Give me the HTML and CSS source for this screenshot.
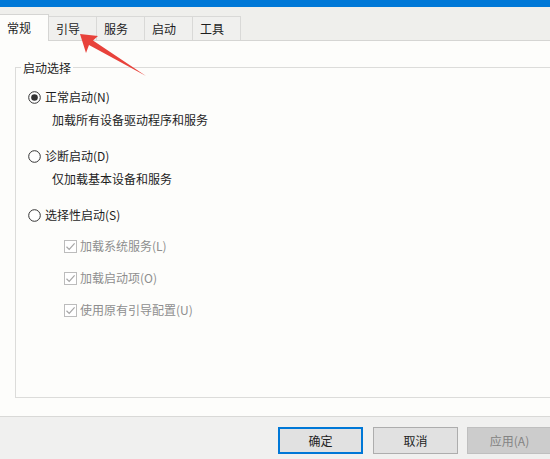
FILE: index.html
```html
<!DOCTYPE html>
<html lang="zh-CN">
<head>
<meta charset="utf-8">
<title>系统配置</title>
<link rel="stylesheet" href="styles.css">
</head>
<body>
<div class="window">
  <div class="titlebar"></div>
  <div class="tabs">
    <div class="tab active">常规</div>
    <div class="tab">引导</div>
    <div class="tab">服务</div>
    <div class="tab">启动</div>
    <div class="tab">工具</div>
  </div>
  <div class="panel">
    <div class="group">
      <div class="legend">启动选择</div>
      <div class="opt first">
        <svg class="radio" width="13" height="13" viewBox="0 0 13 13"><circle cx="6.5" cy="6.5" r="5.8" fill="#fff" stroke="#333" stroke-width="1"/><circle cx="6.5" cy="6.5" r="3.3" fill="#333"/></svg>
        <span>正常启动(N)</span>
      </div>
      <div class="desc">加载所有设备驱动程序和服务</div>
      <div class="opt">
        <svg class="radio" width="13" height="13" viewBox="0 0 13 13"><circle cx="6.5" cy="6.5" r="5.8" fill="#fff" stroke="#333" stroke-width="1"/></svg>
        <span>诊断启动(D)</span>
      </div>
      <div class="desc">仅加载基本设备和服务</div>
      <div class="opt">
        <svg class="radio" width="13" height="13" viewBox="0 0 13 13"><circle cx="6.5" cy="6.5" r="5.8" fill="#fff" stroke="#333" stroke-width="1"/></svg>
        <span>选择性启动(S)</span>
      </div>
      <div class="check">
        <svg class="box" width="13" height="13" viewBox="0 0 13 13"><rect x="0.5" y="0.5" width="12" height="12" fill="#fff" stroke="#bcbcbc"/><path d="M2.5 6.8 L5.2 9.4 L10.6 3.4" fill="none" stroke="#a6a6a6" stroke-width="1.2"/></svg>
        <span>加载系统服务(L)</span>
      </div>
      <div class="check">
        <svg class="box" width="13" height="13" viewBox="0 0 13 13"><rect x="0.5" y="0.5" width="12" height="12" fill="#fff" stroke="#bcbcbc"/><path d="M2.5 6.8 L5.2 9.4 L10.6 3.4" fill="none" stroke="#a6a6a6" stroke-width="1.2"/></svg>
        <span>加载启动项(O)</span>
      </div>
      <div class="check">
        <svg class="box" width="13" height="13" viewBox="0 0 13 13"><rect x="0.5" y="0.5" width="12" height="12" fill="#fff" stroke="#bcbcbc"/><path d="M2.5 6.8 L5.2 9.4 L10.6 3.4" fill="none" stroke="#a6a6a6" stroke-width="1.2"/></svg>
        <span>使用原有引导配置(U)</span>
      </div>
    </div>
  </div>
  <div class="footer">
    <div class="btn default">确定</div>
    <div class="btn">取消</div>
    <div class="btn disabled">应用(A)</div>
  </div>
  <svg class="arrow" width="550" height="100" viewBox="0 0 550 100"><polygon points="80,34 98,36 93,40.5 146,76 89,45 86,53" fill="#e8423b"/></svg>
</div>
</body>
</html>
```
FILE: styles.css
```css
html, body {
  margin: 0;
  padding: 0;
}
body {
  width: 550px;
  height: 459px;
  overflow: hidden;
  background: #f0f0ef;
  font-family: "Noto Sans CJK SC", "Noto Sans", sans-serif;
  font-size: 12px;
  color: #1e1e1e;
}
.window {
  position: relative;
  width: 550px;
  height: 459px;
  display: flex;
  flex-direction: column;
}
.titlebar {
  height: 7px;
  background: #0078d7;
  flex: none;
}
.tabs {
  flex: none;
  display: flex;
  align-items: flex-end;
  height: 34px;
  background: #efefec;
  border-bottom: 1px solid #d5d5d3;
  box-sizing: border-box;
}
.tab {
  width: 48px;
  height: 24px;
  box-sizing: border-box;
  padding-left: 7px;
  line-height: 24px;
  background: #f0f0ee;
  border: 1px solid #d9d9d7;
  border-bottom: none;
  border-left: none;
  margin-bottom: 0;
}
.tab.active {
  width: 49px;
  height: 27px;
  line-height: 25px;
  background: #fdfdfb;
  margin-bottom: -1px;
  border-color: #d5d5d3;
}
.panel {
  flex: none;
  height: 376px;
  box-sizing: border-box;
  background: #fdfdfb;
  border-bottom: 1px solid #d9d9d7;
  padding-top: 26px;
  padding-left: 15px;
}
.group {
  height: 331px;
  box-sizing: border-box;
  border: 1px solid #dcdcda;
  border-right: none;
  padding-left: 12px;
  display: flex;
  flex-direction: column;
  align-items: flex-start;
}
.legend {
  margin-top: -8px;
  margin-left: -7px;
  padding: 0 2px;
  line-height: 16px;
  background: #fdfdfb;
}
.opt, .check {
  display: flex;
  align-items: center;
  height: 16px;
  line-height: 16px;
}
.opt {
  margin-top: 20px;
}
.opt.first {
  margin-top: 13px;
}
.radio {
  margin-right: 4px;
  flex: none;
}
.desc {
  margin-top: 7px;
  margin-left: 24px;
  line-height: 16px;
}
.check {
  margin-top: 16px;
  margin-left: 36px;
  color: #8e8e8e;
}
.opt + .check {
  margin-top: 15px;
}
.box {
  margin-right: 3px;
  flex: none;
}
.footer {
  flex: 1;
  display: flex;
  align-items: flex-start;
  padding-top: 10px;
  padding-left: 278px;
  gap: 10px;
  background: #f0f0ef;
}
.btn {
  width: 85px;
  height: 27px;
  box-sizing: border-box;
  flex: none;
  border: 1px solid #adadad;
  background: #e1e1e1;
  text-align: center;
  line-height: 25px;
}
.btn.default {
  border: 2px solid #0078d7;
  line-height: 23px;
}
.btn.disabled {
  margin-left: -1px;
  border-color: #bfbfbf;
  background: #cccccc;
  color: #838383;
}
.arrow {
  position: absolute;
  left: 0;
  top: 0;
  pointer-events: none;
}
```
